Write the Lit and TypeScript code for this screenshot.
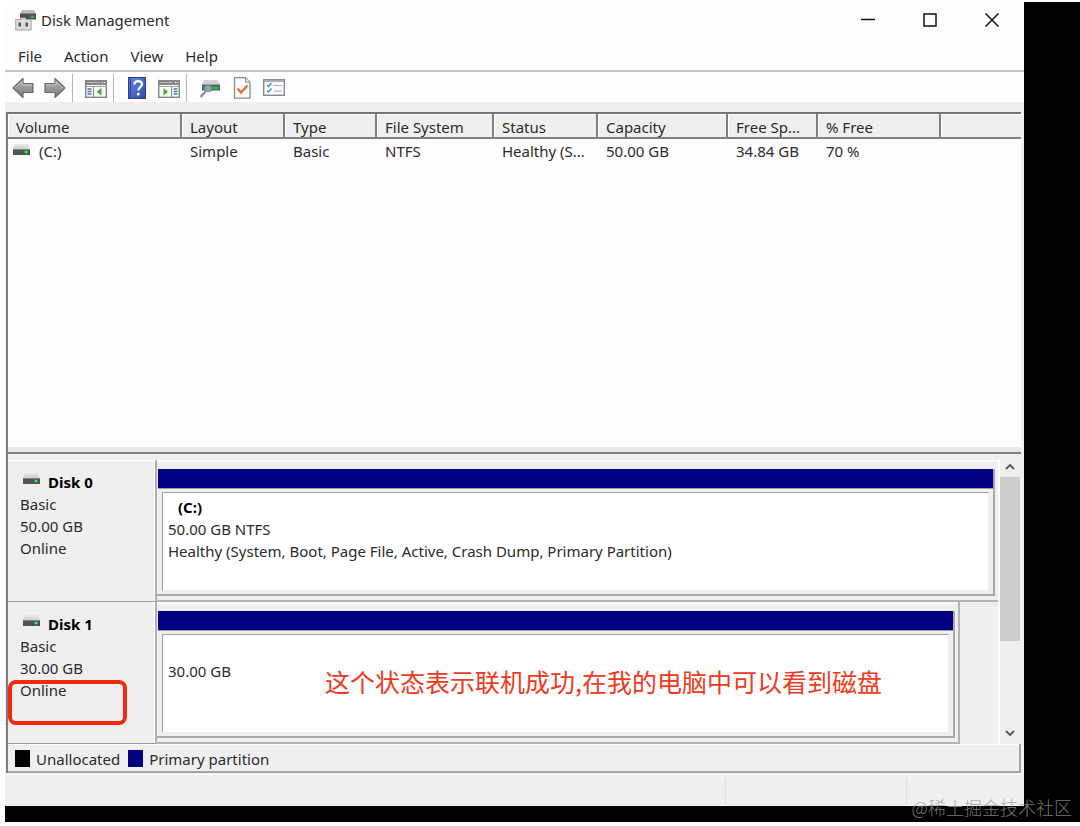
import { LitElement, html, css, svg, nothing } from "lit";
import { customElement, property } from "lit/decorators.js";

const drive = svg`
  <path d="M3.500 0h12l2.500 5H1z" fill="#d6d6d6"/>
  <path d="M4 0h11l1 2H3z" fill="#e6e6e6"/>
  <rect x="1" y="5" width="17" height="6" fill="#4d5557"/>
  <rect x="1" y="5" width="17" height="1" fill="#7d8486"/>
  <rect x="12" y="6.500" width="4" height="3" fill="#1fa636"/>
  <rect x="13.500" y="7" width="1.500" height="2" fill="#5dff62"/>`;

const arrow = svg`
  <defs><linearGradient id="g" x1="0" y1="0" x2="0" y2="1"><stop offset="0" stop-color="#b4b4b4"/><stop offset="1" stop-color="#7c7c7c"/></linearGradient></defs>
  <path d="M1 11 11 1.500V6.500h10v9H11V20.500z" fill="url(#g)" stroke="#6b6b6b" stroke-width="1.200" stroke-linejoin="round"/>
  <path d="M3 11 10 4.500V8h9.500" fill="none" stroke="#c4c4c4"/>`;

const panel = (right: boolean) => svg`
  <rect x=".7" y="3.700" width="20.600" height="16.600" fill="#fbfbfb" stroke="#858585" stroke-width="1.400"/>
  <rect x="1" y="4" width="20" height="4" fill="#85888b"/>
  <path d="M2 5.500h13" stroke="#b5b8ba"/>
  <path d="M17 5.500h1M19 5.500h1" stroke="#fff"/>
  <path d="M1 9.500h20" stroke="#a0a0a0"/>
  ${right
    ? svg`<path d="M13.500 10v10" stroke="#8b8b8b"/><path d="M15.500 12h4M15.500 14.500h4M15.500 17h4" stroke="#4a76ac" stroke-width="1.300"/><path d="M5.500 11v7.500l4.500-3.700z" fill="#3bb52a"/>`
    : svg`<path d="M8.500 10v10" stroke="#8b8b8b"/><path d="M2.500 12h4M2.500 14.500h4M2.500 17h4" stroke="#4a76ac" stroke-width="1.300"/><path d="M16.500 11v7.500l-5-3.700z" fill="#3bb52a"/>`}`;

const help = svg`
  <defs><linearGradient id="h" x1="0" y1="0" x2="1" y2="1"><stop offset="0" stop-color="#6f8bdd"/><stop offset="1" stop-color="#2c48ad"/></linearGradient></defs>
  <rect x="2.500" y=".5" width="17" height="21" fill="url(#h)" stroke="#2a3f96"/>
  <path d="M4.500 1v20" stroke="#2f48a6" stroke-width="1.500"/>
  <path d="M8.500 7.500c0-4.500 7.500-4.500 7.500-.3 0 2.800-3.700 3-3.700 6.300" fill="none" stroke="#fff" stroke-width="2.200"/>
  <circle cx="12.300" cy="17" r="1.500" fill="#fff"/>`;

const rescan = svg`
  <path d="M5 3h13l3 4.500H3z" fill="#d0d3d3"/>
  <rect x="3" y="7.500" width="18" height="6" fill="#566065"/>
  <rect x="14" y="9.500" width="5.500" height="2.500" fill="#20c33b"/>
  <ellipse cx="9" cy="11.500" rx="4" ry="3" fill="#8bb3c4" fill-opacity=".85" stroke="#7d898e" stroke-width="1.200"/>
  <path d="M6.500 14.500 1.500 20" stroke="#8b8b8b" stroke-width="2.200"/>`;

const check = svg`
  <path d="M3.500.7h11l4.500 4.500v16h-15.500z" fill="#fafafa" stroke="#8c8c8c" stroke-width="1.300"/>
  <path d="M14.500.7v4.500H19" fill="#e5e5e5" stroke="#8c8c8c"/>
  <path d="M6.500 11.500l3.500 4 6.500-7" fill="none" stroke="#ee6a35" stroke-width="2.500"/>`;

const list = svg`
  <rect x=".7" y="2.700" width="20.600" height="15.600" fill="#fcfcfc" stroke="#868b91" stroke-width="1.400"/>
  <path d="M1 4h20" stroke="#9a9fa5" stroke-width="1.500"/>
  <path d="M4 8l1.500 1.500L8.500 6M4 13.500l1.500 1.500L8.500 11.500" fill="none" stroke="#3a95dc" stroke-width="1.500"/>
  <path d="M11 8.500h8M11 14h8" stroke="#a5adb5" stroke-width="1.200"/>`;

const manage = svg`
  <path d="M7 0h12l2 4H5z" fill="#b9bbbb"/>
  <rect x="5" y="3.500" width="16" height="6" fill="#4a5154"/>
  <rect x="15.500" y="5.500" width="4" height="2.500" fill="#21b93b"/>
  <path d="M.7 9.500h5V8h5v1.500h5.500V20H.7z" fill="#dadada" stroke="#a8a8a8"/>
  <rect x="3.500" y="12.500" width="2.500" height="4" fill="#555"/>
  <rect x="10.500" y="12.500" width="2.500" height="4" fill="#555"/>`;

interface Disk {
  name: string;
  size: string;
  volume?: string;
  lines: string[];
  note?: string;
}

const disks: Disk[] = [
  {
    name: "Disk 0",
    size: "50.00 GB",
    volume: "(C:)",
    lines: ["50.00 GB NTFS", "Healthy (System, Boot, Page File, Active, Crash Dump, Primary Partition)"],
  },
  { name: "Disk 1", size: "30.00 GB", lines: ["30.00 GB"], note: "这个状态表示联机成功,在我的电脑中可以看到磁盘" },
];

const columns = ["Volume", "Layout", "Type", "File System", "Status", "Capacity", "Free Sp...", "% Free"];
const volumes = [["(C:)", "Simple", "Basic", "NTFS", "Healthy (S...", "50.00 GB", "34.84 GB", "70 %"]];

@customElement("tool-button")
class ToolButton extends LitElement {
  @property() label = "";
  @property({ attribute: false }) icon: unknown = nothing;
  @property({ type: Boolean }) flip = false;
  static styles = css`
    :host { display: flex; }
    button { display: flex; padding: 0; border: 0; background: none; }
    .flip { transform: scaleX(-1); }
  `;
  render() {
    return html`<button aria-label=${this.label}>
      <svg class=${this.flip ? "flip" : ""} width="22" height="22" viewBox="0 0 22 22">${this.icon}</svg>
    </button>`;
  }
}

@customElement("disk-row")
class DiskRow extends LitElement {
  @property({ attribute: false }) disk!: Disk;
  static styles = css`
    :host { display: grid; grid-template-columns: 149px 1fr; height: 142px; box-sizing: border-box; line-height: 22px; }
    h2, p { margin: 0; font-size: inherit; }
    .info { position: relative; padding: 11px 0 0 12px; border-right: 2px solid #b0b0b0; border-bottom: 1px solid #9c9c9c; box-shadow: inset -1px 0 #fff, inset 0 1px #fafafa; }
    .title { display: flex; gap: 7px; padding-left: 2px; color: #000; }
    .title svg { margin-top: 2px; }
    .mark { position: absolute; left: 0; right: 28px; top: 78px; height: 45px; box-sizing: border-box; border: 4px solid #f5290f; border-radius: 8px; }
    .area { border-bottom: 2px solid #b4b4b4; padding: 9px 3px 4px 0; box-shadow: inset 0 2px #fafafa; }
    .area.short { margin-right: 38px; border-right: 2px solid #b4b4b4; }
    .part { display: flex; flex-direction: column; box-sizing: border-box; height: 100%; border-right: 2px solid #a8a8b0; border-bottom: 2px solid #a8a8a8; }
    .bar { height: 19px; margin-left: 1px; background: #000080; border-bottom: 1px solid #9c9c9c; }
    .body { flex: 1; position: relative; margin: 3px 4px 3px 5px; padding: 3px 0 0 5px; background: #fff; border: 1px solid #a0a0a0; border-right-color: #eee; border-bottom-color: #eee; }
    .vol { padding-left: 10px; font-weight: 700; color: #000; }
    .blank { padding-top: 25px; }
    .note { position: absolute; left: 162px; top: 27px; white-space: nowrap; font: 25px/38px "Noto Sans CJK SC", sans-serif; color: #ee3a20; }
  `;
  render() {
    const d = this.disk;
    return html`
      <div class="info">
        <h2 class="title"><svg width="19" height="12" viewBox="0 0 19 12">${drive}</svg>${d.name}</h2>
        <p>Basic</p>
        <p>${d.size}</p>
        <p>Online</p>
        ${d.note ? html`<div class="mark"></div>` : nothing}
      </div>
      <div class="area ${d.note ? "short" : ""}">
        <div class="part">
          <div class="bar"></div>
          <div class="body ${d.volume ? "" : "blank"}">
            ${d.volume ? html`<p class="vol">${d.volume}</p>` : nothing}
            ${d.lines.map((l) => html`<p>${l}</p>`)}
            ${d.note ? html`<div class="note">${d.note}</div>` : nothing}
          </div>
        </div>
      </div>`;
  }
}

@customElement("app-root")
class AppRoot extends LitElement {
  static styles = css`
    :host { display: block; position: relative; box-sizing: border-box; height: 100vh; padding: 2px 0 4px 5px; background: #fff; font: 15px/22px "Noto Sans", "Open Sans", sans-serif; color: #2b2b2b; }
    button { font: inherit; color: inherit; border: 0; background: none; padding: 0; }
    .desktop { box-sizing: border-box; height: 100%; padding: 0 56px 16px 0; background: #000; }
    .window { display: flex; flex-direction: column; height: 100%; background: #fefdfe; }
    .titlebar { display: flex; align-items: center; height: 36px; padding: 0 1px 0 10px; }
    h1 { flex: 1; margin: 0; padding-left: 4px; font-size: inherit; font-weight: 400; }
    .sys { display: flex; align-items: center; justify-content: center; width: 62px; height: 34px; }
    .menu { display: flex; gap: 22px; height: 28px; padding: 4px 0 0 13px; border-bottom: 2px solid #c6c6c8; }
    .tools { display: flex; box-sizing: border-box; height: 30px; padding: 2px 0 0 7px; }
    .group { display: flex; align-items: center; gap: 10px; padding-right: 6px; margin-right: 12px; border-right: 1px solid #b5b5b5; }
    .group:last-child { border: 0; }
    .content { flex: 1; display: flex; flex-direction: column; min-height: 0; padding: 10px 3px 0 1px; background: #f0eff0; }
    .frame { flex: 1; display: flex; flex-direction: column; min-height: 0; border-left: 2px solid #7d7d7d; border-top: 2px solid #757575; }
    .volumes { flex: 1; min-height: 0; background: #fefdfe; border-bottom: 2px solid #808080; box-shadow: inset 0 -5px #e9e9e9; }
    table { width: 100%; border-collapse: separate; border-spacing: 0; table-layout: fixed; }
    th, td { padding: 0 0 0 8px; text-align: left; font-weight: 400; white-space: nowrap; }
    th { box-sizing: border-box; height: 25px; padding-top: 3px; line-height: 20px; background: #f0eff0; border-right: 2px solid #808080; border-bottom: 2px solid #808080; box-shadow: inset 1px 1px #fff; }
    th:last-child { border-right: 0; }
    td { padding-top: 1px; }
    .c0 { width: 174px; } .c1 { width: 103px; } .c2 { width: 92px; } .c3 { width: 117px; }
    .c4 { width: 104px; } .c5 { width: 130px; } .c6 { width: 90px; } .c7 { width: 123px; }
    .name { display: flex; gap: 8px; margin-left: -4px; }
    .name svg { margin-top: 4px; }
    .disks { display: grid; grid-template-columns: 1fr 23px; padding-top: 6px; }
    .scroll { display: flex; flex-direction: column; border-left: 2px solid #fbfbfb; }
    .scroll svg { display: block; }
    .thumb { height: 164px; background: #cdcdcd; margin-right: 1px; }
    .track { flex: 1; }
    .up, .down { display: flex; align-items: center; justify-content: center; height: 17px; padding: 0 2px 4px 0; box-sizing: border-box; }
    .down { height: 22px; padding-bottom: 0; }
    .legend { display: flex; align-items: center; gap: 6px; height: 25px; padding: 2px 0 0 7px; border: solid #a5a5a5; border-width: 0 2px 2px 0; box-shadow: inset 0 1px #fcfcfc; }
    .swatch { width: 15px; height: 17px; background: #000; }
    .swatch.primary { background: #000080; margin-left: 2px; }
    .status { display: grid; grid-template-columns: 1fr 181px 115px; height: 25px; margin-top: 1px; padding: 4px 0 2px; border-top: 1px solid #fafafa; }
    .status div + div { border-left: 1px solid #dedede; }
    .watermark { position: absolute; right: 8px; bottom: 5px; font: 18px/28px "Noto Sans CJK SC", sans-serif; font-weight: 300; color: rgba(150, 150, 150, 0.8); }
  `;
  render() {
    return html`
      <div class="desktop">
        <main class="window">
          <header class="titlebar">
            <svg width="22" height="21" viewBox="0 0 22 21">${manage}</svg>
            <h1>Disk Management</h1>
            <button class="sys" aria-label="Minimize"><svg width="14" height="14"><path d="M0 6.500h14" stroke="#111" stroke-width="1.500"/></svg></button>
            <button class="sys" aria-label="Maximize"><svg width="14" height="14"><rect x="1" y="1" width="12" height="12" fill="none" stroke="#111" stroke-width="1.500"/></svg></button>
            <button class="sys" aria-label="Close"><svg width="14" height="14"><path d="M.5.5l13 13M13.500.5l-13 13" stroke="#111" stroke-width="1.500"/></svg></button>
          </header>
          <nav class="menu">${["File", "Action", "View", "Help"].map((m) => html`<button>${m}</button>`)}</nav>
          <div class="tools">
            <div class="group">
              <tool-button label="Back" .icon=${arrow}></tool-button>
              <tool-button label="Forward" .icon=${arrow} flip></tool-button>
            </div>
            <div class="group"><tool-button label="Console tree" .icon=${panel(false)}></tool-button></div>
            <div class="group">
              <tool-button label="Help" .icon=${help}></tool-button>
              <tool-button label="Action pane" .icon=${panel(true)}></tool-button>
            </div>
            <div class="group">
              <tool-button label="Rescan" .icon=${rescan}></tool-button>
              <tool-button label="Apply" .icon=${check}></tool-button>
              <tool-button label="Properties" .icon=${list}></tool-button>
            </div>
          </div>
          <div class="content">
            <div class="frame">
              <div class="volumes">
                <table>
                  <colgroup>${columns.map((_, i) => html`<col class="c${i}">`)}<col></colgroup>
                  <thead><tr>${columns.map((c) => html`<th>${c}</th>`)}<th></th></tr></thead>
                  <tbody>
                    ${volumes.map((v) => html`<tr>${v.map((c, i) => i
                      ? html`<td>${c}</td>`
                      : html`<td><div class="name"><svg width="19" height="12" viewBox="0 0 19 12">${drive}</svg>${c}</div></td>`)}<td></td></tr>`)}
                  </tbody>
                </table>
              </div>
              <div class="disks">
                <div>${disks.map((d) => html`<disk-row .disk=${d}></disk-row>`)}</div>
                <div class="scroll">
                  <button class="up" aria-label="Scroll up"><svg width="10" height="7"><path d="M1 6l4-4 4 4" fill="none" stroke="#555" stroke-width="1.800"/></svg></button>
                  <div class="thumb"></div>
                  <div class="track"></div>
                  <button class="down" aria-label="Scroll down"><svg width="10" height="7"><path d="M1 1l4 4 4-4" fill="none" stroke="#555" stroke-width="1.800"/></svg></button>
                </div>
              </div>
              <div class="legend">
                <span class="swatch"></span>Unallocated
                <span class="swatch primary"></span>Primary partition
              </div>
            </div>
            <footer class="status"><div></div><div></div><div></div></footer>
          </div>
        </main>
      </div>
      <div class="watermark">@稀土掘金技术社区</div>`;
  }
}
